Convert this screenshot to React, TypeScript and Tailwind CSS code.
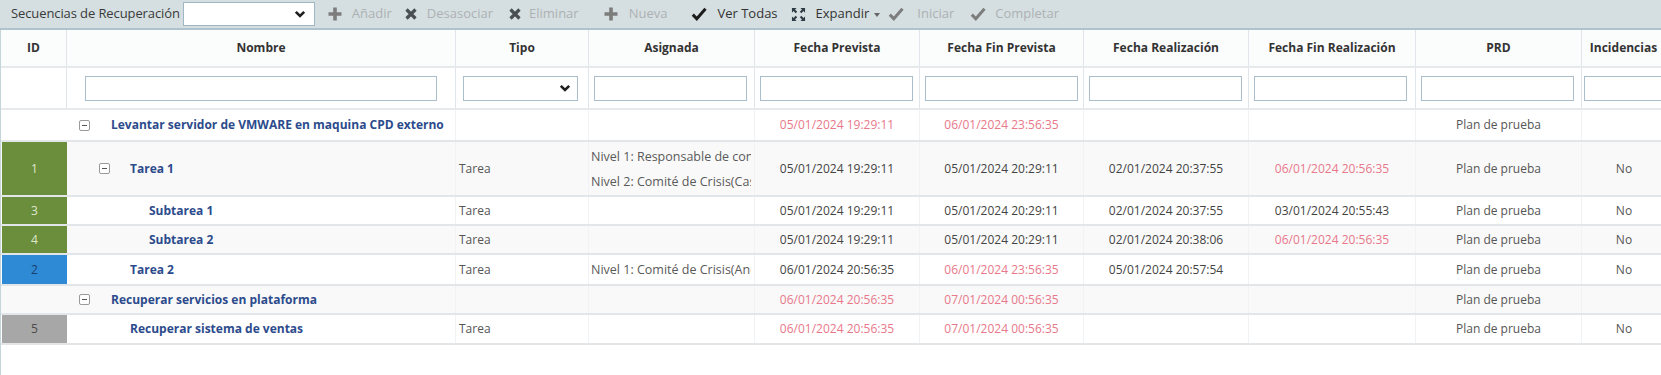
import React from "react";

type Cell = { text: string; red?: boolean };

interface Row {
    group?: boolean;
    id?: string;
    idBg?: string;
    idText?: string;
    h: string;
    bg: string;
    name: string;
    level: number;
    toggle?: boolean;
    tipo?: string;
    asignada?: string[];
    fp?: Cell;
    ffp?: Cell;
    fr?: Cell;
    ffr?: Cell;
    prd?: string;
    inc?: string;
}

const rows: Row[] = [
    {
        group: true, h: "h-[32px]", bg: "bg-white", level: 0, toggle: true,
        name: "Levantar servidor de VMWARE en maquina CPD externo",
        fp: { text: "05/01/2024 19:29:11", red: true },
        ffp: { text: "06/01/2024 23:56:35", red: true },
        prd: "Plan de prueba",
    },
    {
        id: "1", idBg: "bg-[#6a8e3b]", idText: "text-[#dfe6cf]", h: "h-[55px]", bg: "bg-[#f9f9f9]", level: 1, toggle: true,
        name: "Tarea 1", tipo: "Tarea",
        asignada: ["Nivel 1: Responsable de continuidad", "Nivel 2: Comité de Crisis(Casa)"],
        fp: { text: "05/01/2024 19:29:11" },
        ffp: { text: "05/01/2024 20:29:11" },
        fr: { text: "02/01/2024 20:37:55" },
        ffr: { text: "06/01/2024 20:56:35", red: true },
        prd: "Plan de prueba", inc: "No",
    },
    {
        id: "3", idBg: "bg-[#6a8e3b]", idText: "text-[#dfe6cf]", h: "h-[29px]", bg: "bg-white", level: 2,
        name: "Subtarea 1", tipo: "Tarea",
        fp: { text: "05/01/2024 19:29:11" },
        ffp: { text: "05/01/2024 20:29:11" },
        fr: { text: "02/01/2024 20:37:55" },
        ffr: { text: "03/01/2024 20:55:43" },
        prd: "Plan de prueba", inc: "No",
    },
    {
        id: "4", idBg: "bg-[#6a8e3b]", idText: "text-[#dfe6cf]", h: "h-[29px]", bg: "bg-[#f9f9f9]", level: 2,
        name: "Subtarea 2", tipo: "Tarea",
        fp: { text: "05/01/2024 19:29:11" },
        ffp: { text: "05/01/2024 20:29:11" },
        fr: { text: "02/01/2024 20:38:06" },
        ffr: { text: "06/01/2024 20:56:35", red: true },
        prd: "Plan de prueba", inc: "No",
    },
    {
        id: "2", idBg: "bg-[#2f8ad6]", idText: "text-[#18406b]", h: "h-[31px]", bg: "bg-white", level: 1,
        name: "Tarea 2", tipo: "Tarea",
        asignada: ["Nivel 1: Comité de Crisis(Andalucía)"],
        fp: { text: "06/01/2024 20:56:35" },
        ffp: { text: "06/01/2024 23:56:35", red: true },
        fr: { text: "05/01/2024 20:57:54" },
        prd: "Plan de prueba", inc: "No",
    },
    {
        group: true, h: "h-[29px]", bg: "bg-[#f9f9f9]", level: 0, toggle: true,
        name: "Recuperar servicios en plataforma",
        fp: { text: "06/01/2024 20:56:35", red: true },
        ffp: { text: "07/01/2024 00:56:35", red: true },
        prd: "Plan de prueba",
    },
    {
        id: "5", idBg: "bg-[#a7a7a7]", idText: "text-[#4a4a4a]", h: "h-[30px]", bg: "bg-white", level: 1,
        name: "Recuperar sistema de ventas", tipo: "Tarea",
        fp: { text: "06/01/2024 20:56:35", red: true },
        ffp: { text: "07/01/2024 00:56:35", red: true },
        prd: "Plan de prueba", inc: "No",
    },
];

function PlusIcon({ className }: { className: string }) {
    return (
        <svg viewBox="0 0 16 16" className={className} fill="none">
            <path d="M8 1.5v13M1.5 8h13" stroke="currentColor" strokeWidth="3.6" />
        </svg>
    );
}

function XIcon({ className }: { className: string }) {
    return (
        <svg viewBox="0 0 14 14" className={className} fill="none">
            <path d="M2.5 2.5l9 9M11.5 2.5l-9 9" stroke="currentColor" strokeWidth="3.2" />
        </svg>
    );
}

function CheckIcon({ className }: { className: string }) {
    return (
        <svg viewBox="0 0 16 16" className={className} fill="none">
            <path d="M1.8 8.6l4 4.2L14.5 2.8" stroke="currentColor" strokeWidth="3" />
        </svg>
    );
}

function ExpandIcon() {
    return (
        <svg viewBox="0 0 16 16" className="w-[15px] h-[15px] text-[#2f3b44]" fill="currentColor">
            <path d="M1 1h5L4.3 2.7 6.6 5 5 6.6 2.7 4.3 1 6z" />
            <path d="M15 1h-5l1.7 1.7L9.4 5 11 6.6l2.3-2.3L15 6z" />
            <path d="M1 15h5l-1.7-1.7L6.6 11 5 9.4l-2.3 2.3L1 10z" />
            <path d="M15 15h-5l1.7-1.7L9.4 11 11 9.4l2.3 2.3L15 10z" />
        </svg>
    );
}

function ChevronDown() {
    return (
        <svg viewBox="0 0 12 12" className="w-[12px] h-[12px] text-[#1f1f1f]" fill="none">
            <path d="M1.8 3.8L6 8l4.2-4.2" stroke="currentColor" strokeWidth="2.6" />
        </svg>
    );
}

function Toggle() {
    return (
        <span className="w-[11px] h-[11px] border border-[#9a9a9a] rounded-[2px] flex items-center justify-center bg-white">
            <span className="w-[5px] h-px bg-[#555]" />
        </span>
    );
}

function DateCell({ cell, w }: { cell?: Cell; w: string }) {
    return (
        <div className={`${w} shrink-0 h-full border-r border-[#f0f2f3] flex items-center justify-center`}>
            {cell && (
                <span className={cell.red ? "text-[#e8788a]" : "text-[#444]"}>{cell.text}</span>
            )}
        </div>
    );
}

export default function App() {
    const headers = [
        { label: "ID", w: "w-[66px]" },
        { label: "Nombre", w: "w-[389px]" },
        { label: "Tipo", w: "w-[133px]" },
        { label: "Asignada", w: "w-[166px]" },
        { label: "Fecha Prevista", w: "w-[165px]" },
        { label: "Fecha Fin Prevista", w: "w-[164px]" },
        { label: "Fecha Realización", w: "w-[165px]" },
        { label: "Fecha Fin Realización", w: "w-[167px]" },
        { label: "PRD", w: "w-[166px]" },
        { label: "Incidencias", w: "w-[84px]" },
    ];

    return (
        <div className="w-[1661px] h-[375px] overflow-hidden bg-white font-['Open_Sans',sans-serif] text-[12px] text-[#444]">
            {/* Toolbar */}
            <div className="h-[30px] bg-[#d5dfe1] border-b-2 border-[#aec3cd] flex items-center pl-[11px] whitespace-nowrap text-[13px]">
                <span className="text-[#3a3a3a] tracking-[-0.1px]">Secuencias de Recuperación</span>
                <div className="ml-[3px] w-[132px] h-[24px] bg-white border border-[#9fb6c3] flex items-center justify-end pr-[8px]">
                    <ChevronDown />
                </div>
                <PlusIcon className="ml-[12px] w-[16px] h-[16px] text-[#7c7c7c]" />
                <span className="ml-[9px] text-[#adb1b3]">Añadir</span>
                <XIcon className="ml-[12px] w-[14px] h-[14px] text-[#4a4f52]" />
                <span className="ml-[9px] text-[#adb1b3]">Desasociar</span>
                <XIcon className="ml-[15px] w-[14px] h-[14px] text-[#4a4f52]" />
                <span className="ml-[7px] text-[#adb1b3]">Eliminar</span>
                <PlusIcon className="ml-[24px] w-[16px] h-[16px] text-[#7c7c7c]" />
                <span className="ml-[10px] text-[#adb1b3]">Nueva</span>
                <CheckIcon className="ml-[24px] w-[16px] h-[16px] text-[#1c1c1c]" />
                <span className="ml-[10px] text-[#333]">Ver Todas</span>
                <span className="ml-[13px]"><ExpandIcon /></span>
                <span className="ml-[10px] text-[#333]">Expandir</span>
                <span className="ml-[5px] mt-[2px] w-0 h-0 border-l-[3.5px] border-r-[3.5px] border-t-[4px] border-l-transparent border-r-transparent border-t-[#666]" />
                <CheckIcon className="ml-[8px] w-[16px] h-[16px] text-[#7d7d7d]" />
                <span className="ml-[13px] text-[#adb1b3]">Iniciar</span>
                <CheckIcon className="ml-[16px] w-[16px] h-[16px] text-[#7d7d7d]" />
                <span className="ml-[9px] text-[#adb1b3]">Completar</span>
            </div>

            <div className="border-l border-[#c6d4db] h-[345px]">
                {/* Header row */}
                <div className="flex h-[38px] bg-[#fbfcfc] border-b-2 border-[#e6eaec]">
                    {headers.map((h) => (
                        <div
                            key={h.label}
                            className={`${h.w} shrink-0 border-r border-[#dfe5e8] flex items-center justify-center font-bold text-[12px] text-[#333] whitespace-nowrap`}
                        >
                            {h.label}
                        </div>
                    ))}
                </div>

                {/* Filter row */}
                <div className="flex h-[42px] bg-white border-b-2 border-[#e6eaec]">
                    <div className="w-[66px] shrink-0 border-r border-[#dfe5e8]" />
                    <div className="w-[389px] shrink-0 border-r border-[#dfe5e8] flex items-center justify-center">
                        <div className="w-[352px] h-[25px] border border-[#a9bdca] bg-white" />
                    </div>
                    <div className="w-[133px] shrink-0 border-r border-[#dfe5e8] flex items-center pl-[7px]">
                        <div className="w-[115px] h-[25px] border border-[#a9bdca] bg-white flex items-center justify-end pr-[6px]">
                            <ChevronDown />
                        </div>
                    </div>
                    {[
                        "w-[166px]", "w-[165px]", "w-[164px]", "w-[165px]", "w-[167px]", "w-[166px]",
                    ].map((w, i) => (
                        <div key={i} className={`${w} shrink-0 border-r border-[#dfe5e8] flex items-center pl-[5px]`}>
                            <div className="w-[153px] h-[25px] border border-[#a9bdca] bg-white" />
                        </div>
                    ))}
                    <div className="w-[84px] shrink-0 flex items-center pl-[2px]">
                        <div className="w-[100px] h-[25px] border border-[#a9bdca] bg-white shrink-0" />
                    </div>
                </div>

                {/* Data rows */}
                {rows.map((r, idx) => (
                    <div key={idx} className={`flex ${r.h} ${r.bg} border-b-2 border-[#e3e6e8]`}>
                        <div className="w-[66px] shrink-0 h-full pl-[1px]">
                            {r.id && (
                                <div className={`w-full h-full ${r.idBg} ${r.idText} flex items-center justify-center`}>
                                    {r.id}
                                </div>
                            )}
                        </div>
                        <div className="w-[389px] shrink-0 h-full border-r border-[#f0f2f3] flex items-center">
                            {r.level === 0 && (
                                <div className="flex items-center pl-[12px]">
                                    <Toggle />
                                    <span className="ml-[21px] font-bold text-[#2c4b8c]">{r.name}</span>
                                </div>
                            )}
                            {r.level === 1 && (
                                <div className="flex items-center pl-[32px]">
                                    {r.toggle ? <Toggle /> : <span className="w-[11px]" />}
                                    <span className="ml-[20px] font-bold text-[#2c4b8c]">{r.name}</span>
                                </div>
                            )}
                            {r.level === 2 && (
                                <span className="pl-[82px] font-bold text-[#2c4b8c]">{r.name}</span>
                            )}
                        </div>
                        <div className="w-[133px] shrink-0 h-full border-r border-[#f0f2f3] flex items-center pl-[3px] text-[#555]">
                            {r.tipo}
                        </div>
                        <div className="w-[166px] shrink-0 h-full border-r border-[#f0f2f3] flex items-center pl-[2px] pr-[3px]">
                            {r.asignada && (
                                <div className="w-full overflow-hidden whitespace-nowrap leading-[25px] text-[#5a5a5a] text-[12.5px]">
                                    {r.asignada.map((a) => (
                                        <div key={a}>{a}</div>
                                    ))}
                                </div>
                            )}
                        </div>
                        <DateCell cell={r.fp} w="w-[165px]" />
                        <DateCell cell={r.ffp} w="w-[164px]" />
                        <DateCell cell={r.fr} w="w-[165px]" />
                        <DateCell cell={r.ffr} w="w-[167px]" />
                        <div className="w-[166px] shrink-0 h-full border-r border-[#f0f2f3] flex items-center justify-center text-[#555]">
                            {r.prd}
                        </div>
                        <div className="w-[84px] shrink-0 h-full flex items-center justify-center text-[#555]">
                            {r.inc}
                        </div>
                    </div>
                ))}
            </div>
        </div>
    );
}
